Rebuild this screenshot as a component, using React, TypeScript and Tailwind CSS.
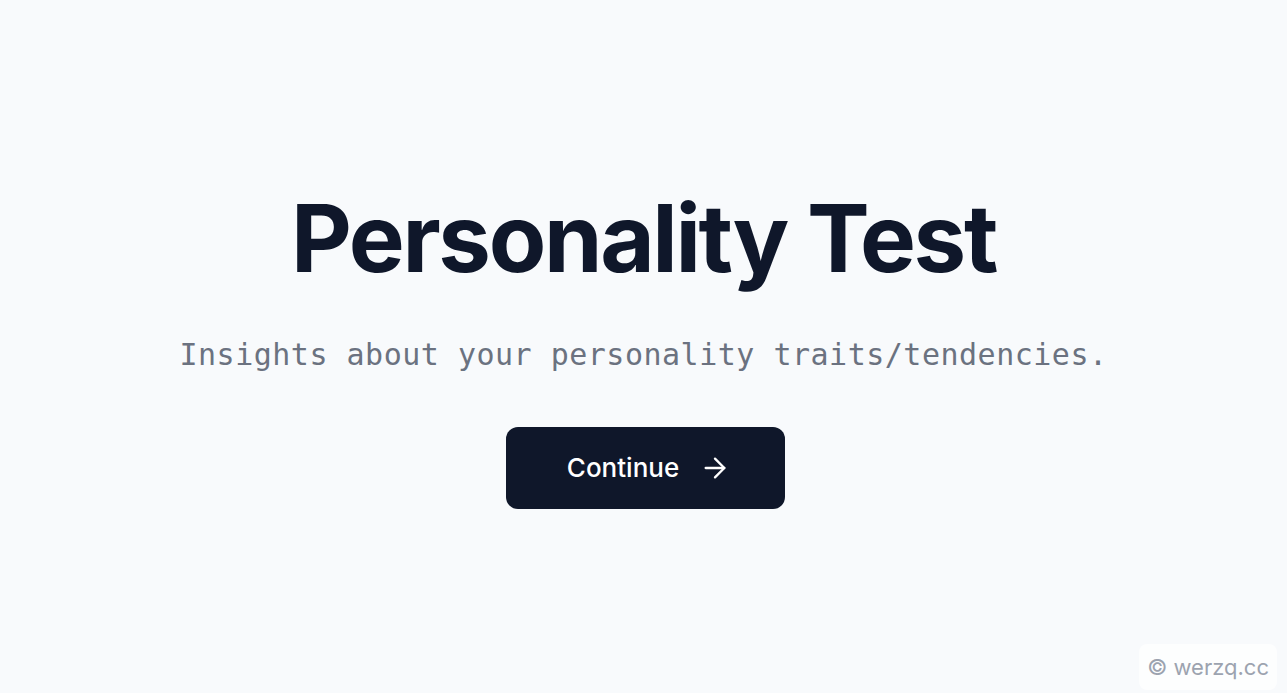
import React from 'react';
import { ArrowRight } from 'lucide-react';

const App: React.FC = () => {
  return (
    <div className="relative min-h-screen bg-[#f8fafc] flex flex-col items-center justify-center pt-[6px] font-['Inter',sans-serif]">
      {/* Hero */}
      <h1 className="text-[94px] leading-none font-bold text-[#0f172a] tracking-tight">Personality Test</h1>
      <p className="mt-[52px] text-3xl tracking-[0.5px] text-[#6b7280] font-['DejaVu_Sans_Mono',monospace]">
        Insights about your personality traits/tendencies.
      </p>
      <button className="mt-[54px] ml-1 inline-flex items-center h-[82px] pl-[61px] pr-[54px] rounded-xl bg-[#0f172a] text-white text-[26px] font-medium">
        Continue
        <ArrowRight className="ml-5 h-8 w-8" strokeWidth={1.75} />
      </button>

      {/* Watermark */}
      <div className="absolute right-[10px] bottom-[3px] rounded-lg bg-white/70 px-2 py-2 text-[22px] leading-[30px] text-[#9ca3af]">
        © werzq.cc
      </div>
    </div>
  );
};

export default App;
